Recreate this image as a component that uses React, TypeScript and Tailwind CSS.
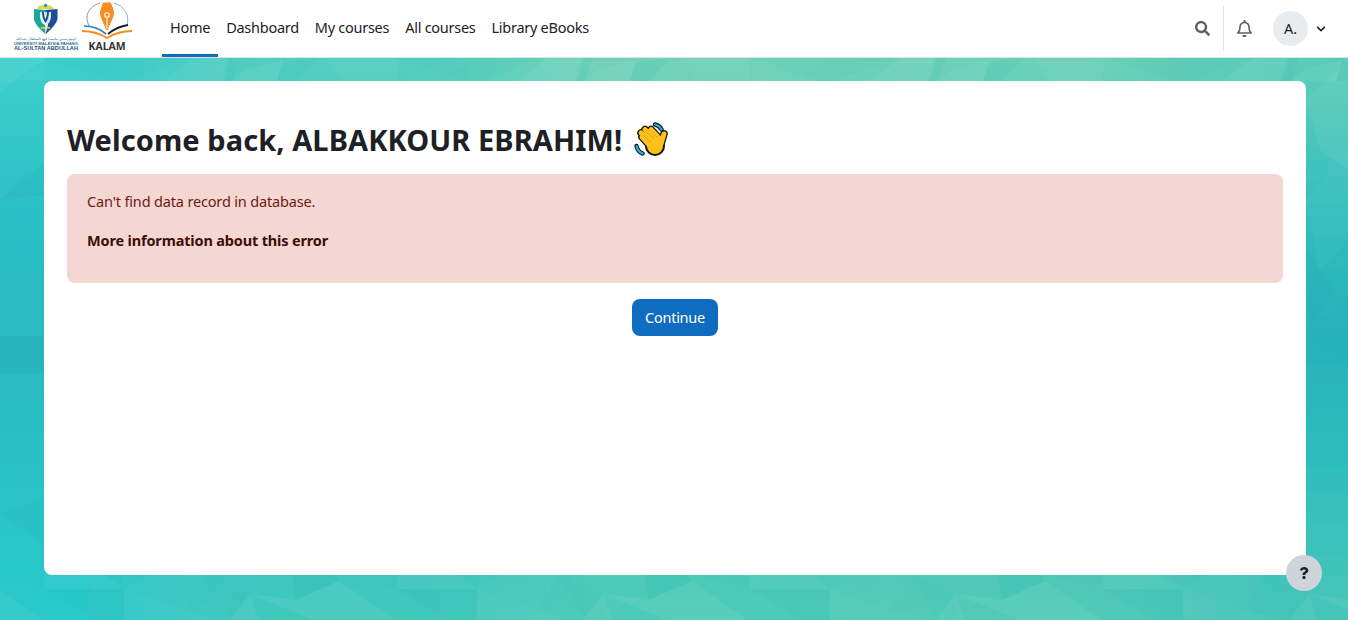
import React from 'react';
import { FaSearch, FaRegBell, FaChevronDown, FaQuestion } from 'react-icons/fa';

const navItems = ['Home', 'Dashboard', 'My courses', 'All courses', 'Library eBooks'];

// colour samples of the page wallpaper, blurred together below
const wallRows = [
  { y: -100, h: 230, c: ['#3dd0cc', '#55cfc0', '#74d3b7', '#70d2b6', '#5ecdb9'] },
  { y: 130, h: 140, c: ['#29c0c7', '#40c8c0', '#50c8bc', '#40c4bc', '#30bfbe'] },
  { y: 270, h: 140, c: ['#2ab8c0', '#30b8bc', '#38bcbc', '#30b4bc', '#26b0ba'] },
  { y: 410, h: 130, c: ['#29c2c6', '#34c0c0', '#40c4bc', '#38c0bc', '#2ebfbd'] },
  { y: 540, h: 240, c: ['#2bc9cb', '#42c8bd', '#50cab8', '#52cab8', '#46c5b8'] },
];
const wallCols = [-300, 170, 510, 840, 1180, 1700];

const Wallpaper = () => (
  <svg className="absolute inset-0 w-full h-full" viewBox="0 0 1348 620" preserveAspectRatio="none" aria-hidden="true">
    <defs>
      <filter id="soft" x="-20%" y="-40%" width="140%" height="180%">
        <feGaussianBlur stdDeviation="55" />
      </filter>
      <pattern id="facets" patternUnits="userSpaceOnUse" x="44" y="0" width="353" height="620">
        {/* top strip */}
        <polygon points="239,62 274,58 252,81 233,81" fill="#22b8a8" opacity="0.12" />
        <polygon points="186,58 180,81 188,81 196,58" fill="#22b8a8" opacity="0.1" />
        <polygon points="188,81 201,70 239,60 233,81" fill="#ffffff" opacity="0.05" />
        <polygon points="0,58 78,84 146,58" fill="#22b8a8" opacity="0.07" />
        <polygon points="119,81 151,58 184,58 178,81" fill="#ffffff" opacity="0.05" />
        <polygon points="283,58 353,58 353,81 300,81" fill="#ffffff" opacity="0.03" />
        {/* bottom strip */}
        <polygon points="0,589 80,589 80,620 50,620" fill="#20b8b0" opacity="0.11" />
        <polygon points="80,589 140,610 178,620 80,620" fill="#ffffff" opacity="0.03" />
        <polygon points="80,589 140,610 162,575 105,575" fill="#ffffff" opacity="0.02" />
        <polygon points="162,575 186,620 208,620 206,594" fill="#20b8b0" opacity="0.08" />
        <polygon points="206,594 186,620 214,620" fill="#ffffff" opacity="0.06" />
        <polygon points="248,575 252,600 295,581 291,575" fill="#20b8a8" opacity="0.18" />
        <polygon points="206,594 252,600 295,581 351,620 270,620" fill="#ffffff" opacity="0.05" />
        <polygon points="0,575 60,575 80,589 0,589" fill="#ffffff" opacity="0.03" />
        <polygon points="295,575 353,589 353,575" fill="#20b8a8" opacity="0.06" />
      </pattern>
    </defs>
    <g filter="url(#soft)">
      {wallRows.map((row) =>
        row.c.map((c, i) => (
          <rect key={`${row.y}-${i}`} x={wallCols[i]} y={row.y} width={wallCols[i + 1] - wallCols[i]} height={row.h} fill={c} />
        )),
      )}
    </g>
    <rect width="1348" height="620" fill="url(#facets)" />
    {/* left edge */}
    <polygon points="0,92 44,58 0,58" fill="#ffffff" opacity="0.05" />
    <polygon points="0,200 44,163 44,195" fill="#1fa8b4" opacity="0.15" />
    <polygon points="0,336 44,336 44,373 0,373" fill="#1fa0b0" opacity="0.2" />
    <polygon points="0,513 44,546 44,500" fill="#1fa8b4" opacity="0.1" />
    {/* right edge */}
    <polygon points="1306,100 1348,60 1348,170 1320,150" fill="#ffffff" opacity="0.05" />
    <polygon points="1306,200 1348,150 1348,240 1320,270" fill="#ffffff" opacity="0.03" />
    <polygon points="1306,250 1335,290 1310,330" fill="#1fa0b0" opacity="0.1" />
    <polygon points="1306,330 1348,300 1348,360 1325,350" fill="#1fa0b0" opacity="0.08" />
  </svg>
);

const UniversityLogo = () => (
  <svg width="66" height="50" viewBox="0 0 66 50" aria-label="Universiti Malaysia Pahang Al-Sultan Abdullah">
    <g transform="translate(0 -2)">
      <path d="M21 8 L32 9 L32 24 L32.5 33 C28 29 22 24 21 18 Z" fill="#1aa6a0" />
      <path d="M32 9 L44.5 8 L44.5 18 C43 24 37 29 32.5 33.5 L35 24 Z" fill="#1c4f96" />
      <path d="M27 11 L32 11 L32 24 C29 23 27 19 27 15 Z" fill="#e6f5f2" />
      <path d="M32.5 11 L38 11 L38 15 C38 19 36 23 33 24 Z" fill="#dfe7f4" />
      <path d="M29 11 C29 16 31 20 32.5 22 C34 20 36 16 36 11 L34 11 C34 15 33 17 32.5 18 C32 17 31 15 31 11 Z" fill="#12508e" />
      <path d="M24 8 C26 3 30 4 32 6 C35 3 39 4 41 8 Z" fill="#e9d44b" />
      <circle cx="32.5" cy="4.5" r="1.8" fill="#1aa6a0" />
      <rect x="28" y="26" width="9" height="1.6" fill="#e9d44b" />
    </g>
    <text x="33" y="36.5" textAnchor="middle" fontSize="3.6" fill="#2c6e78" fontFamily="'DejaVu Sans', sans-serif">اونيۏرسيتي مليسيا ڤهڠ السلطان عبدالله</text>
    <text x="33" y="42" textAnchor="middle" fontSize="3.9" fontWeight="700" fill="#2d6f8c" textLength="64" lengthAdjust="spacingAndGlyphs" fontFamily="'Liberation Sans', sans-serif">UNIVERSITI MALAYSIA PAHANG</text>
    <text x="33" y="47.4" textAnchor="middle" fontSize="5.4" fontWeight="700" fill="#1c4f7c" textLength="64" lengthAdjust="spacingAndGlyphs" fontFamily="'Liberation Sans', sans-serif">AL-SULTAN ABDULLAH</text>
  </svg>
);

const KalamLogo = () => (
  <svg width="52" height="52" viewBox="0 0 52 52" aria-label="KALAM">
    <path d="M9 26 C2 16 8 5 19 2" fill="none" stroke="#8a8a8a" strokeWidth="0.9" />
    <path d="M33 2 C43 5 49 14 46 24" fill="none" stroke="#7ea3d8" strokeWidth="0.9" />
    <path d="M22 1.5 L30 1.5 C31 5 33 9 33 12 C33 16 30 20 27 29 L25 29 C22 20 19 16 19 12 C19 9 21 5 22 1.5 Z" fill="#f78d1e" />
    <circle cx="26" cy="14" r="2.3" fill="none" stroke="#ffffff" strokeWidth="1.1" />
    <rect x="25.5" y="16" width="1" height="12" fill="#ffffff" />
    <path d="M3 25 C10 25 18 27 25 33" fill="none" stroke="#2f7fd0" strokeWidth="1.7" />
    <path d="M47 24 C40 25 33 28 27 33" fill="none" stroke="#222222" strokeWidth="2" />
    <path d="M1 30 C10 30 18 32 26 37 C34 32 42 30 51 30" fill="none" stroke="#f78d1e" strokeWidth="1.9" />
    <text x="26" y="49" textAnchor="middle" fontSize="10" fontWeight="700" fill="#333333" textLength="37" lengthAdjust="spacingAndGlyphs" fontFamily="'Noto Sans', sans-serif">KALAM</text>
  </svg>
);

const WaveEmoji = () => (
  <svg width="36" height="36" viewBox="0 0 36 36" aria-label="waving hand" className="shrink-0">
    <g fill="none" stroke="#111" strokeLinecap="round" strokeWidth="7.6">
      <path d="M8 15 L17 25 M7 11 L19 21 M11 7.5 L22 18 M17 7.5 L25 16 M30 12 L27 22" />
    </g>
    <circle cx="21" cy="24" r="10" fill="#111" />
    <circle cx="21" cy="24" r="8" fill="#fcc21b" />
    <g fill="none" stroke="#fcc21b" strokeLinecap="round" strokeWidth="5">
      <path d="M8 15 L17 25 M7 11 L19 21 M11 7.5 L22 18 M17 7.5 L25 16 M30 12 L27 22" />
    </g>
    <g fill="none" stroke="#e09a12" strokeLinecap="round" strokeWidth="0.7">
      <path d="M9 13 L17 20 M12 9.5 L20 16.5 M18 9.5 L23 15" />
    </g>
    <g fill="none" stroke="#111" strokeLinecap="round" strokeWidth="4.4">
      <path d="M21 2.5 C24 3 26 4.5 27.5 7.5 M2.5 24 C3 27 5 30 8.5 31.5" />
    </g>
    <g fill="none" stroke="#29b6e8" strokeLinecap="round" strokeWidth="2.2">
      <path d="M21 2.5 C24 3 26 4.5 27.5 7.5 M2.5 24 C3 27 5 30 8.5 31.5" />
    </g>
  </svg>
);

export default function App() {
  return (
    <div className="relative h-[620px] overflow-hidden font-['Noto_Sans',sans-serif] text-[#1d2125]">
      <Wallpaper />

      <header className="relative h-[58px] bg-white border-b border-[#dee2e6] flex items-stretch pl-[13px] pr-[22px]">
        <div className="flex items-start pt-px gap-[2px] w-[149px]">
          <div className="pt-[2px]"><UniversityLogo /></div>
          <KalamLogo />
        </div>
        <nav className="flex items-stretch">
          {navItems.map((item, i) => (
            <a
              key={item}
              className={`flex items-center px-2 text-[14.5px] tracking-[-0.27px] whitespace-nowrap ${
                i === 0 ? 'border-b-[3px] border-[#0f6cbf] pt-[1px]' : 'pb-[2px]'
              }`}
            >
              {item}
            </a>
          ))}
        </nav>
        <div className="ml-auto flex items-center">
          <FaSearch className="text-[#5f5f5f] text-[15px] mr-[13px]" />
          <div className="w-px h-[45px] bg-[#dee2e6]" />
          <FaRegBell className="text-[#5f5f5f] text-[17px] ml-[12px] mr-[20px]" />
          <div className="w-[35px] h-[35px] rounded-full bg-[#e9ecef] flex items-center justify-center text-[14.5px]">A.</div>
          <FaChevronDown className="text-[#1d2125] text-[10px] ml-[8px]" />
        </div>
      </header>

      <main className="relative pl-[44px] pr-[42px] pt-[23px]">
        <div className="bg-white rounded-lg h-[494px] px-[23px] pt-[41px]">
          <h2 className="flex items-center h-[36px] gap-[12px] text-[29px] leading-none font-bold tracking-[0.08px] text-[#1d2125]">
            <span className="pb-[2px]">Welcome back, ALBAKKOUR EBRAHIM!</span>
            <WaveEmoji />
          </h2>
          <div className="mt-[16px] h-[109px] rounded-lg bg-[#f4d6d2] px-5 pt-[16px] text-[14.5px] leading-[22px] tracking-[-0.16px] text-[#6e1a12]">
            <p>Can't find data record in database.</p>
            <p className="mt-[17px] font-bold text-[#3f0d08]">More information about this error</p>
          </div>
          <div className="mt-[16px] flex justify-center">
            <button className="w-[86px] h-[37px] rounded-lg bg-[#0f6cbf] text-white text-[14.5px] tracking-[-0.25px]">Continue</button>
          </div>
        </div>
      </main>

      <button className="absolute left-[1286px] top-[555px] w-9 h-9 rounded-full bg-[#ced4da] flex items-center justify-center text-[#1d2125]" aria-label="Help">
        <FaQuestion className="text-[12px]" />
      </button>
    </div>
  );
}
